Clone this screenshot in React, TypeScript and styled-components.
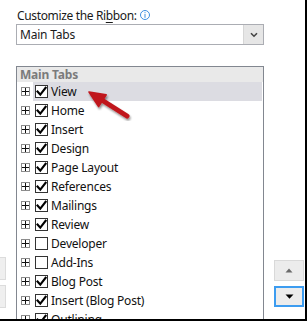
import React from "react";
import styled, { createGlobalStyle } from "styled-components";

const Global = createGlobalStyle`
  html, body { margin: 0; padding: 0; background: #ffffff; overflow: hidden; }
  * { box-sizing: border-box; }
`;

const FONT = `"Noto Sans", "Open Sans", "Liberation Sans", sans-serif`;

const Frame = styled.div`
  position: relative;
  width: 307px;
  height: 321px;
  overflow: hidden;
  background: #ffffff;
  border-right: 2px solid #000;
  border-bottom: 2px solid #000;
  font-family: ${FONT};
  font-size: 12px;
  color: #1a1a1a;
  padding-top: 7px;
`;

const Top = styled.div`
  margin-left: 16px;
  width: 248px;
  display: flex;
  flex-direction: column;
`;

const Label = styled.div`
  display: flex;
  align-items: center;
  gap: 3px;
  margin-left: 1px;
  height: 17px;
  line-height: 17px;
  letter-spacing: -0.35px;
  u { text-decoration: underline; text-underline-offset: 2px; }
`;

const InfoIcon = styled.span`
  display: inline-flex;
  width: 10px;
  height: 10px;
  margin-top: -1px;
`;

const Combo = styled.div`
  display: flex;
  height: 21px;
  border: 1px solid #abadb3;
`;

const ComboText = styled.div`
  flex: 1;
  padding-left: 3px;
  line-height: 19px;
  letter-spacing: -0.2px;
`;

const ComboButton = styled.div`
  width: 20px;
  background: #e6e6e6;
  border-left: 1px solid #d6d6d6;
  display: flex;
  align-items: center;
  justify-content: center;
`;

const Body = styled.div`
  display: flex;
  align-items: flex-start;
  margin-top: 21px;
`;

const Stubs = styled.div`
  width: 6px;
  margin-top: 191px;
  margin-right: 10px;
  display: flex;
  flex-direction: column;
  gap: 5px;
`;

const Stub = styled.div`
  height: 23px;
  background: #efefef;
  border: 1px solid #dcdcdc;
  border-left: none;
`;

const ListBox = styled.div`
  width: 248px;
  height: 260px;
  border: 1px solid #828790;
  border-bottom: none;
  overflow: hidden;
`;

const ListHeader = styled.div`
  height: 15px;
  background: #e9e9e9;
  color: #7b7b7b;
  font-weight: 700;
  padding-left: 3px;
  line-height: 15px;
  letter-spacing: -0.2px;
`;

const Row = styled.div`
  display: flex;
  align-items: center;
  height: 19px;
`;

const Expander = styled.span`
  width: 9px;
  height: 9px;
  margin-left: 4px;
  margin-right: 3px;
  border: 1px solid #8c8c8c;
  display: inline-flex;
  align-items: center;
  justify-content: center;
  background: #fff;
  flex: none;
`;

const Item = styled.div<{ $selected?: boolean }>`
  flex: 1;
  height: 19px;
  display: flex;
  align-items: center;
  gap: 3px;
  padding-left: 2px;
  margin-right: 1px;
  background: ${(p) => (p.$selected ? "#dcdce2" : "transparent")};
`;

const Check = styled.span`
  width: 13px;
  height: 13px;
  border: 1px solid #333333;
  background: #fff;
  display: inline-flex;
  align-items: center;
  justify-content: center;
  flex: none;
`;

const ItemText = styled.span`
  line-height: 19px;
  letter-spacing: -0.2px;
  color: #111;
`;

const Side = styled.div`
  margin-left: 10px;
  margin-top: 194px;
  display: flex;
  flex-direction: column;
  gap: 5px;
`;

const MoveButton = styled.div<{ $focused?: boolean }>`
  width: 30px;
  height: 21px;
  background: #ececec;
  border: ${(p) => (p.$focused ? "2px solid #3c9cf0" : "1px solid #d9d9d9")};
  display: flex;
  align-items: center;
  justify-content: center;
`;

const ArrowLayer = styled.svg`
  position: absolute;
  left: 0;
  top: 0;
  pointer-events: none;
`;

const items: { label: string; checked: boolean }[] = [
  { label: "View", checked: true },
  { label: "Home", checked: true },
  { label: "Insert", checked: true },
  { label: "Design", checked: true },
  { label: "Page Layout", checked: true },
  { label: "References", checked: true },
  { label: "Mailings", checked: true },
  { label: "Review", checked: true },
  { label: "Developer", checked: false },
  { label: "Add-Ins", checked: false },
  { label: "Blog Post", checked: true },
  { label: "Insert (Blog Post)", checked: true },
  { label: "Outlining", checked: true },
];

const Plus = () => (
  <svg width="7" height="7" viewBox="0 0 7 7">
    <path d="M0 3.5H7M3.5 0V7" stroke="#111" strokeWidth="1" />
  </svg>
);

const Tick = () => (
  <svg width="11" height="11" viewBox="0 0 11 11">
    <path d="M1.5 5.5 L4.3 8.6 L9.6 1.8" fill="none" stroke="#000" strokeWidth="2.1" strokeLinecap="square" />
  </svg>
);

export default function App() {
  return (
    <>
      <Global />
      <Frame>
        <Top>
          <Label>
            <span>
              Customize the Ri<u>b</u>bon:
            </span>
            <InfoIcon>
              <svg width="10" height="10" viewBox="0 0 10 10">
                <circle cx="5" cy="5" r="4.5" fill="#fff" stroke="#3d8ee0" strokeWidth="1" />
                <rect x="4.5" y="2.2" width="1" height="1" fill="#3d8ee0" />
                <rect x="4.5" y="4" width="1" height="3.8" fill="#3d8ee0" />
              </svg>
            </InfoIcon>
          </Label>
          <Combo>
            <ComboText>Main Tabs</ComboText>
            <ComboButton>
              <svg width="8" height="6" viewBox="0 0 8 6">
                <path d="M1 1.2 L4 4.2 L7 1.2" fill="none" stroke="#444" strokeWidth="1.6" />
              </svg>
            </ComboButton>
          </Combo>
        </Top>
        <Body>
          <Stubs>
            <Stub />
            <Stub />
          </Stubs>
          <ListBox>
            <ListHeader>Main Tabs</ListHeader>
            {items.map((it, i) => (
              <Row key={it.label}>
                <Expander>
                  <Plus />
                </Expander>
                <Item $selected={i === 0}>
                  <Check>{it.checked && <Tick />}</Check>
                  <ItemText>{it.label}</ItemText>
                </Item>
              </Row>
            ))}
          </ListBox>
          <Side>
            <MoveButton>
              <svg width="8" height="5" viewBox="0 0 8 5">
                <path d="M4 0.5 L7.5 4.5 L0.5 4.5 Z" fill="#6a6a6a" />
              </svg>
            </MoveButton>
            <MoveButton $focused>
              <svg width="9" height="5" viewBox="0 0 9 5">
                <path d="M0.5 0.5 L8.5 0.5 L4.5 4.8 Z" fill="#000" />
              </svg>
            </MoveButton>
          </Side>
        </Body>
        <ArrowLayer width="307" height="321" viewBox="0 0 307 321">
          <defs>
            <filter id="sh" x="-20%" y="-20%" width="140%" height="140%">
              <feGaussianBlur in="SourceAlpha" stdDeviation="1.2" />
              <feOffset dx="1" dy="2" result="b" />
              <feComponentTransfer>
                <feFuncA type="linear" slope="0.45" />
              </feComponentTransfer>
              <feMerge>
                <feMergeNode />
                <feMergeNode in="SourceGraphic" />
              </feMerge>
            </filter>
          </defs>
          <g filter="url(#sh)">
            <path d="M127 116 L101 99.5" stroke="#c0161c" strokeWidth="5" strokeLinecap="round" />
            <path d="M89 92 L106.2 94.8 L98.6 106.6 Z" fill="#c0161c" stroke="#c0161c" strokeWidth="1.5" strokeLinejoin="round" />
          </g>
        </ArrowLayer>
      </Frame>
    </>
  );
}
